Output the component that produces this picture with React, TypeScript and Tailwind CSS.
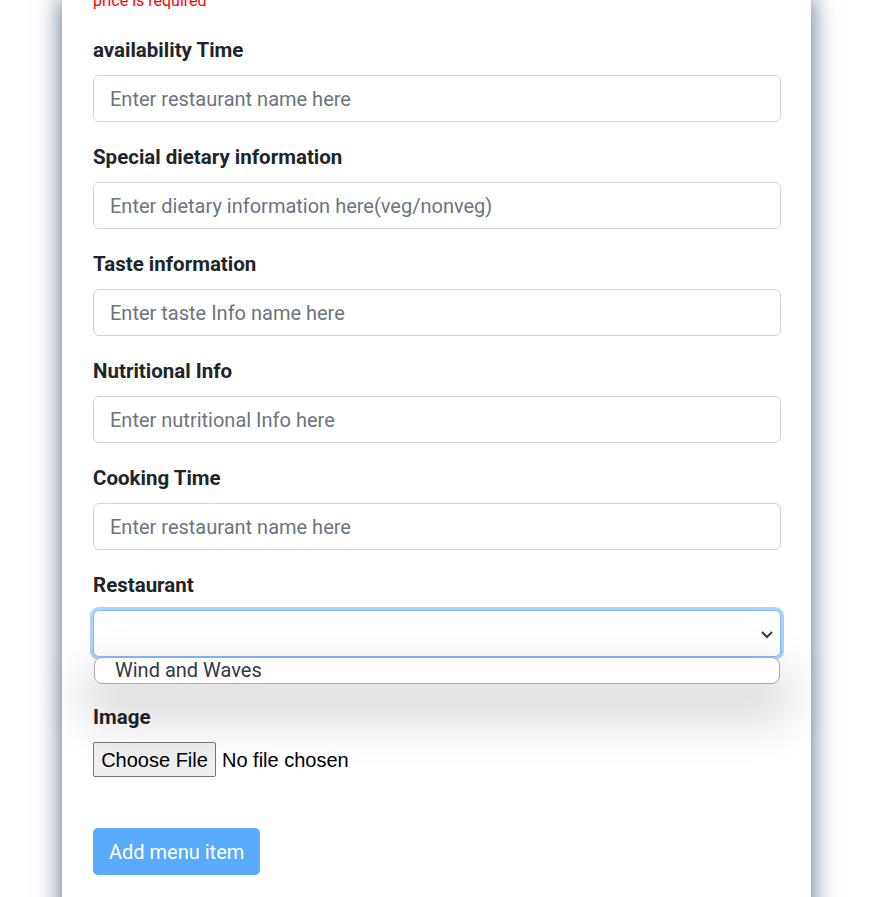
import React from "react";

const font = { fontFamily: "Roboto, 'Noto Sans', sans-serif" };

function Field({ label, placeholder }: { label: string; placeholder: string }) {
  return (
    <div className="mb-[21px]">
      <label className="block text-[20.5px] leading-[28px] font-bold text-[#212529] mb-[11px]">{label}</label>
      <div className="h-[47px] rounded-[6px] border border-[#ced4da] bg-white flex items-center pl-[16px] text-[20px] text-[#6c757d]">
        {placeholder}
      </div>
    </div>
  );
}

export default function App() {
  return (
    <div className="w-[873px] h-[897px] bg-white overflow-hidden" style={font}>
      <div className="ml-[62px] w-[749px] h-[940px] flex flex-col bg-white shadow-[0_0_22px_2px_rgba(50,80,110,0.75)] pl-[31px] pr-[30px]">
        <div className="-mt-[11px] text-[16px] leading-[24px] text-[#ff0000] mb-[23px]">price is required</div>
        <Field label="availability Time" placeholder="Enter restaurant name here" />
        <Field label="Special dietary information" placeholder="Enter dietary information here(veg/nonveg)" />
        <Field label="Taste information" placeholder="Enter taste Info name here" />
        <Field label="Nutritional Info" placeholder="Enter nutritional Info here" />
        <Field label="Cooking Time" placeholder="Enter restaurant name here" />
        <div className="relative">
          <label className="block text-[20.5px] leading-[28px] font-bold text-[#212529] mb-[11px]">Restaurant</label>
          <div className="relative h-[47px] rounded-[6px] border border-[#86b7fe] bg-white shadow-[0_0_0_3px_rgba(140,190,255,0.7)] flex items-center justify-end pr-[6px]">
            <svg width="14" height="10" viewBox="0 0 14 10">
              <polyline points="2,3 7,8 12,3" fill="none" stroke="#343a40" strokeWidth="2" />
            </svg>
          </div>
          <div className="absolute left-[1px] right-[1px] top-[86px] h-[27px] z-10 bg-white border border-[#aaaaaa] rounded-[8px] shadow-[0_25px_45px_15px_rgba(0,0,0,0.13)] flex items-center pl-[20px] pb-[2px] text-[20px] text-[#333842]">
            Wind and Waves
          </div>
        </div>
        <div className="mt-[46px]">
          <label className="block text-[20.5px] leading-[28px] font-bold text-[#212529] mb-[11px]">Image</label>
          <div className="flex items-center">
            <div className="h-[35px] w-[123px] rounded-[2px] border border-[#767676] bg-[#efefef] flex items-center justify-center text-[20px] text-black" style={{ fontFamily: "'Liberation Sans', Arial, sans-serif" }}>
              Choose File
            </div>
            <span className="ml-[6px] text-[20px] text-black" style={{ fontFamily: "'Liberation Sans', Arial, sans-serif" }}>No file chosen</span>
          </div>
        </div>
        <div className="mt-[51px]">
          <div className="inline-flex h-[47px] items-center px-[16px] rounded-[5px] bg-[#5aabfe] text-white text-[20px]">Add menu item</div>
        </div>
      </div>
    </div>
  );
}
